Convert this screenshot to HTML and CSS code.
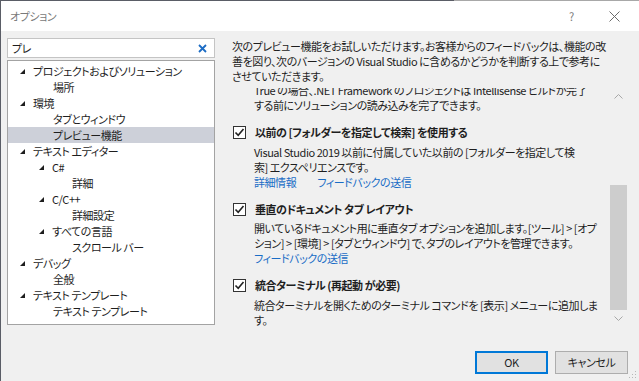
FILE: index.html
```html
<!DOCTYPE html>
<html lang="ja">
	<head>
		<meta charset="utf-8">
		<title>オプション</title>
		<link rel="stylesheet" href="styles.css">
	</head>
	<body>
		<div class="window">

			<div class="topline"></div>

			<div class="titlebar">
				<div class="title">オプション</div>
				<div class="help">?</div>
				<div class="close">
					<svg width="11" height="11" viewBox="0 0 11 11"><path d="M0.5 0.5 L10.5 10.5 M10.5 0.5 L0.5 10.5" stroke="#6b6b6b" stroke-width="1" fill="none"/></svg>
				</div>
			</div>

			<div class="main">

				<div class="left">
					<div class="search">
						<span class="searchText">プレ</span>
						<svg class="clear" width="9" height="9" viewBox="0 0 9 9"><path d="M1 1 L8 8 M8 1 L1 8" stroke="#1c6cc4" stroke-width="1.8" fill="none"/></svg>
					</div>
					<div class="tree">
						<div class="node lv0"><i class="tri"></i>プロジェクトおよびソリューション</div>
						<div class="node lv1 leaf">場所</div>
						<div class="node lv0"><i class="tri"></i>環境</div>
						<div class="node lv1 leaf">タブとウィンドウ</div>
						<div class="node lv1 leaf selected">プレビュー機能</div>
						<div class="node lv0"><i class="tri"></i>テキスト エディター</div>
						<div class="node lv1"><i class="tri"></i>C#</div>
						<div class="node lv2 leaf">詳細</div>
						<div class="node lv1"><i class="tri"></i>C/C++</div>
						<div class="node lv2 leaf">詳細設定</div>
						<div class="node lv1"><i class="tri"></i>すべての言語</div>
						<div class="node lv2 leaf">スクロール バー</div>
						<div class="node lv0"><i class="tri"></i>デバッグ</div>
						<div class="node lv1 leaf">全般</div>
						<div class="node lv0"><i class="tri"></i>テキスト テンプレート</div>
						<div class="node lv1 leaf">テキスト テンプレート</div>
					</div>
				</div>

				<div class="right">
					<div class="intro">
						<div>次のプレビュー機能をお試しいただけます。お客様からのフィードバックは、機能の改</div>
						<div>善を図り、次のバージョンの Visual Studio に含めるかどうかを判断する上で参考に</div>
						<div>させていただきます。</div>
					</div>

					<div class="scroller">
						<div class="viewport">
							<div class="content">

								<div class="desc first">
									<div>True の場合、.NET Framework のプロジェクトは Intellisense ビルドが完了</div>
									<div>する前にソリューションの読み込みを完了できます。</div>
								</div>

								<div class="option">
									<div class="label"><span class="check"><svg width="11" height="11" viewBox="0 0 11 11"><path d="M1.5 5.5 L4.2 8.3 L9.5 2" stroke="#222" stroke-width="1.6" fill="none"/></svg></span>以前の [フォルダーを指定して検索] を使用する</div>
									<div class="desc">
										<div>Visual Studio 2019 以前に付属していた以前の [フォルダーを指定して検</div>
										<div>索] エクスペリエンスです。</div>
										<div class="links"><span class="link">詳細情報</span><span class="link">フィードバックの送信</span></div>
									</div>
								</div>

								<div class="option">
									<div class="label"><span class="check"><svg width="11" height="11" viewBox="0 0 11 11"><path d="M1.5 5.5 L4.2 8.3 L9.5 2" stroke="#222" stroke-width="1.6" fill="none"/></svg></span>垂直のドキュメント タブ レイアウト</div>
									<div class="desc">
										<div>開いているドキュメント用に垂直タブ オプションを追加します。[ツール] &gt; [オプ</div>
										<div>ション] &gt; [環境] &gt; [タブとウィンドウ] で、タブのレイアウトを管理できます。</div>
										<div class="links"><span class="link">フィードバックの送信</span></div>
									</div>
								</div>

								<div class="option">
									<div class="label"><span class="check"><svg width="11" height="11" viewBox="0 0 11 11"><path d="M1.5 5.5 L4.2 8.3 L9.5 2" stroke="#222" stroke-width="1.6" fill="none"/></svg></span>統合ターミナル (再起動 が必要)</div>
									<div class="desc">
										<div>統合ターミナルを開くためのターミナル コマンドを [表示] メニューに追加しま</div>
										<div>す。</div>
									</div>
								</div>

							</div>
						</div>
						<div class="scrollbar">
							<svg class="arrow" width="9" height="5" viewBox="0 0 9 5"><path d="M0.5 4.5 L4.5 0.5 L8.5 4.5" stroke="#a8a8a8" fill="none"/></svg>
							<div class="thumb"></div>
							<svg class="arrow" width="9" height="5" viewBox="0 0 9 5"><path d="M0.5 0.5 L4.5 4.5 L8.5 0.5" stroke="#a8a8a8" fill="none"/></svg>
						</div>
					</div>
				</div>

			</div>

			<div class="footer">
				<div class="btn primary">OK</div>
				<div class="btn">キャンセル</div>
				<svg class="grip" width="8" height="8" viewBox="0 0 8 8">
					<rect x="6" y="0" width="1" height="1" fill="#b8b8b8"/>
					<rect x="3" y="3" width="1" height="1" fill="#b8b8b8"/>
					<rect x="6" y="3" width="1" height="1" fill="#b8b8b8"/>
					<rect x="0" y="6" width="1" height="1" fill="#b8b8b8"/>
					<rect x="3" y="6" width="1" height="1" fill="#b8b8b8"/>
					<rect x="6" y="6" width="1" height="1" fill="#b8b8b8"/>
				</svg>
			</div>

		</div>
	</body>
</html>
```

FILE: styles.css
```css
body{
	margin: 0;
	padding: 0;
	font-family: "Noto Sans CJK JP", "Noto Sans", sans-serif;
	font-feature-settings: "palt";
	font-size: 11px;
	letter-spacing: -0.45px;
	color: #1e1e1e;
	overflow: hidden;
}

.window{
	width: 638px;
	height: 381px;
	border-left: 1px solid #5a5d66;
	background: #f0f0f0;
	display: flex;
	flex-direction: column;
}

.topline{
	height: 1px;
	background: linear-gradient(to right, #5a5d66 453px, #a8a8a8 453px);
}

.titlebar{
	height: 30px;
	background: #fff;
	display: flex;
	align-items: center;
}

.title{
	flex: 1;
	padding-left: 9px;
	color: #7a7a7a;
}

.help{
	width: 20px;
	color: #7a7a7a;
	margin-right: 20px;
}

.close{
	width: 11px;
	height: 11px;
	margin-right: 19px;
	display: flex;
}

.main{
	display: flex;
	height: 306px;
	padding-top: 7px;
}

.left{
	margin-left: 6px;
	width: 208px;
	display: flex;
	flex-direction: column;
	gap: 2px;
}

.search{
	height: 18px;
	background: #fff;
	border: 1px solid #c4c4c4;
	display: flex;
	align-items: center;
	padding: 0 7px 0 4px;
}

.searchText{
	flex: 1;
}

.tree{
	height: 261px;
	background: #fff;
	border: 1px solid #a3a3a3;
	padding-top: 2px;
}

.node{
	height: 16px;
	line-height: 16px;
	white-space: nowrap;
	display: flex;
	align-items: center;
}

.tri{
	width: 0;
	height: 0;
	border-left: 5px solid transparent;
	border-bottom: 5px solid #1e1e1e;
	margin-right: 8px;
}

.lv0{ padding-left: 12px; }
.lv1{ padding-left: 31px; }
.lv2{ padding-left: 50px; }

.leaf.lv1{ padding-left: 45px; }
.leaf.lv2{ padding-left: 64px; }

.selected{
	background: #cdd0d9;
}

.right{
	margin-left: 17px;
	width: 395px;
	display: flex;
	flex-direction: column;
}

.intro{
	line-height: 15px;
	padding-top: 1px;
	white-space: nowrap;
}

.scroller{
	margin-top: 4px;
	flex: 1;
	display: flex;
	min-height: 0;
}

.viewport{
	flex: 1;
	overflow: hidden;
}

.content{
	margin-top: -5px;
	line-height: 15px;
	white-space: nowrap;
}

.desc{
	padding-left: 22px;
}

.option{
	margin-top: 12px;
}

.label{
	font-weight: bold;
	display: flex;
	align-items: center;
	margin-bottom: 4.5px;
}

.check{
	width: 11px;
	height: 11px;
	border: 1px solid #333;
	background: #fff;
	margin: 0 9px 0 1px;
	display: flex;
}

.links{
	display: flex;
	gap: 21px;
}

.link{
	color: #1a6dc6;
}

.scrollbar{
	width: 17px;
	display: flex;
	flex-direction: column;
	align-items: center;
	padding-top: 6px;
}

.thumb{
	width: 17px;
	height: 125px;
	background: #cdcdcd;
	margin: 86px 0 6px;
}

.footer{
	flex: 1;
	display: flex;
	justify-content: flex-end;
	align-items: flex-start;
	padding-top: 7px;
	gap: 7px;
	padding-right: 11px;
	position: relative;
}

.btn{
	width: 71px;
	height: 21px;
	line-height: 21px;
	text-align: center;
	background: #e1e1e1;
	border: 1px solid #adadad;
}

.btn.primary{
	width: 69px;
	height: 19px;
	line-height: 19px;
	border: 2px solid #0078d7;
}

.grip{
	position: absolute;
	right: 2px;
	bottom: 2px;
}
```
